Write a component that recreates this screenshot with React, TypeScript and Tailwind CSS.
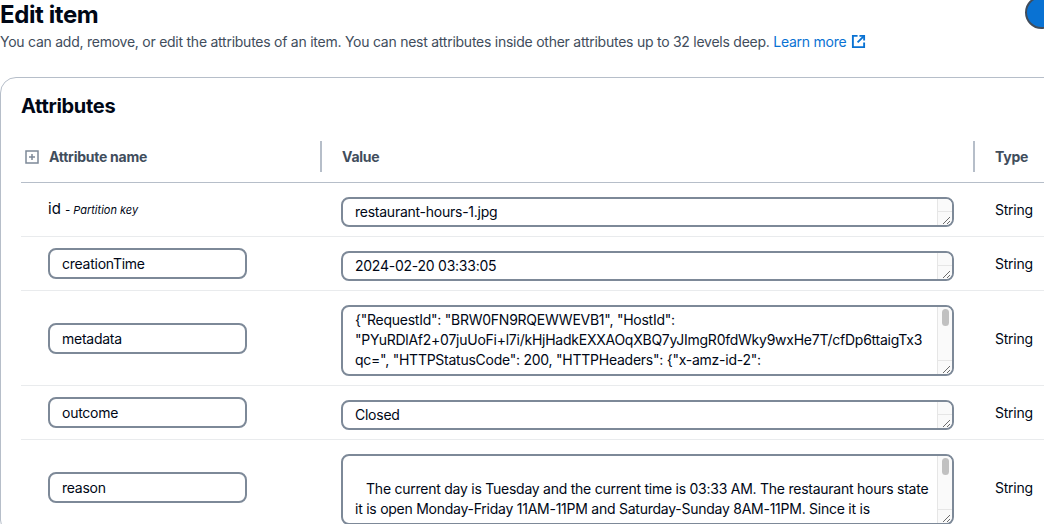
import React from 'react';

type Attr = {
  name: string;
  value: string;
  rows: number;
  isKey?: boolean;
};

const attrs: Attr[] = [
  { name: 'id', value: 'restaurant-hours-1.jpg', rows: 1, isKey: true },
  { name: 'creationTime', value: '2024-02-20 03:33:05', rows: 1 },
  {
    name: 'metadata',
    value:
      '{"RequestId": "BRW0FN9RQEWWEVB1", "HostId":\n"PYuRDlAf2+07juUoFi+l7i/kHjHadkEXXAOqXBQ7yJImgR0fdWky9wxHe7T/cfDp6ttaigTx3\nqc=", "HTTPStatusCode": 200, "HTTPHeaders": {"x-amz-id-2":\n"PYuRDlAf2+07juUoFi+l7i/kHjHadkEXXAOqXBQ7yJImgR0fdWky9wxHe7T/cfDp6ttaigTx3qc=", "x-amz-request-id": "BRW0FN9RQEWWEVB1", "date": "Tue, 20 Feb 2024 03:33:06 GMT", "content-type": "application/json", "server": "AmazonS3"}, "RetryAttempts": 0}',
    rows: 3,
  },
  { name: 'outcome', value: 'Closed', rows: 1 },
  {
    name: 'reason',
    value:
      '\n   The current day is Tuesday and the current time is 03:33 AM. The restaurant hours state\nit is open Monday-Friday 11AM-11PM and Saturday-Sunday 8AM-11PM. Since it is\nTuesday at 03:33 AM, which is outside the opening hours, the restaurant is closed.\n',
    rows: 3,
  },
];

const ExternalIcon = () => (
  <svg width="15" height="15" viewBox="0 0 16 16" fill="none" stroke="currentColor" strokeWidth="2" className="inline-block ml-[5px] -mt-1">
    <path d="M14 9v5H2V2h5" />
    <path d="M9 2h5v5" />
    <path d="M14 2 7 9" />
  </svg>
);

const AddIcon = () => (
  <svg width="14" height="14" viewBox="0 0 14 14" fill="none" stroke="#7d8998" strokeWidth="1.5">
    <rect x="1" y="1" width="12" height="12" />
    <path d="M7 4v6M4 7h6" />
  </svg>
);

const Grip = () => (
  <svg width="14" height="14" viewBox="0 0 14 14" stroke="#6b6b6b" strokeWidth="1">
    <path d="M12 5 5 12M12 9 9 12" />
  </svg>
);

// textarea with a drawn scrollbar gutter, since the headless page hides native scrollbars
const ValueBox: React.FC<{ value: string; rows: number }> = ({ value, rows }) => {
  const multi = rows > 1;
  return (
    <div className={`flex w-[613px] overflow-hidden rounded-lg border-2 border-[#7d8998] bg-white ${multi ? 'h-[71px]' : 'h-[30px]'}`}>
      <textarea
        readOnly
        rows={rows}
        defaultValue={value}
        className="flex-1 resize-none overflow-hidden bg-transparent py-[3px] pl-3 pr-[2px] text-[14px] leading-5 tracking-[-0.25px] text-[#000716] outline-none"
      />
      <div className="flex w-[15px] flex-col border-l border-[#e6e6e6] bg-[#fafafa]">
        <div className="flex-1 px-[4px] pt-[2px]">
          {multi && <div className="h-[17px] w-[7px] rounded-full bg-[#c1c1c1]" />}
        </div>
        <div className="h-[14px] border-t border-[#e6e6e6]">
          <Grip />
        </div>
      </div>
    </div>
  );
};

const Row: React.FC<{ a: Attr }> = ({ a }) => (
  <div className="grid grid-cols-[299px_653px_1fr] border-b border-[#e9ebed]">
    <div className="flex items-center pl-[27px]">
      {a.isKey ? (
        <span className="text-[15px] text-[#000716]">
          {a.name} <i className="text-[11px] text-[#000716]">- Partition key</i>
        </span>
      ) : (
        <input
          readOnly
          defaultValue={a.name}
          className="h-[31px] w-[199px] rounded-lg border-2 border-[#7d8998] px-3 text-[14px] tracking-[-0.25px] text-[#000716] outline-none"
        />
      )}
    </div>
    <div className="pl-[21px] pt-[14px] pb-[9px]">
      <ValueBox value={a.value} rows={a.rows} />
    </div>
    <div className="flex items-center pl-[22px] text-[14px] tracking-[-0.25px] text-[#000716]">String</div>
  </div>
);

export default function App() {
  return (
    <div className="relative w-[1044px] h-[524px] overflow-hidden bg-white text-[#000716] font-['Inter',sans-serif]">
      <div className="absolute left-[1025px] top-[-4px] h-[33px] w-[33px] rounded-full border-2 border-[#414d5c] bg-[#0972d3]" />
      <h1 className="mt-[1px] text-[24px] font-bold leading-[28px] tracking-[-0.4px]">Edit item</h1>
      <p className="mt-[3px] text-[14px] leading-5 tracking-[-0.25px] text-[#414d5c]">
        You can add, remove, or edit the attributes of an item. You can nest attributes inside other attributes up to 32 levels deep.{' '}
        <a className="text-[#0972d3]" href="#">
          Learn more
          <ExternalIcon />
        </a>
      </p>
      <div className="mt-[25px] w-[1100px] rounded-2xl border border-[#b6bec9] pl-5 pt-[16px]">
        <h2 className="text-[20px] font-bold leading-[24px] tracking-[-0.3px]">Attributes</h2>
        <div className="mt-[23px] grid grid-cols-[299px_653px_1fr] border-b border-[#b6bec9] pb-[10px] tracking-[-0.25px]">
          <div className="flex items-center gap-[10px] pl-1 text-[14px] font-bold text-[#414d5c]">
            <AddIcon />
            Attribute name
          </div>
          <div className="flex h-[31px] items-center border-l-2 border-[#b6bec9] pl-5 text-[14px] font-bold text-[#414d5c]">Value</div>
          <div className="flex h-[31px] items-center border-l-2 border-[#b6bec9] pl-5 text-[14px] font-bold text-[#414d5c]">Type</div>
        </div>
        {attrs.map((a) => (
          <Row key={a.name} a={a} />
        ))}
      </div>
    </div>
  );
}
